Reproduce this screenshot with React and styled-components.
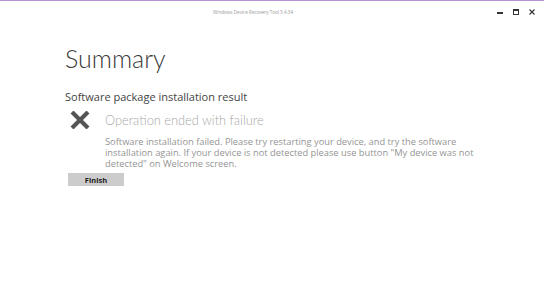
import React from 'react';
import styled, {createGlobalStyle} from 'styled-components';

const GlobalStyle = createGlobalStyle`
  html, body {
    margin: 0;
    padding: 0;
    background: #ffffff;
  }
  body {
    font-family: 'Open Sans', 'Liberation Sans', sans-serif;
  }
`

const Window = styled.div`
  width: 544px;
  height: 300px;
  box-sizing: border-box;
  border-top: 1px solid #b592cf;
  display: flex;
  flex-direction: column;
  overflow: hidden;
`

const TitleBar = styled.div`
  height: 21px;
  display: grid;
  grid-template-columns: 1fr auto 1fr;
  align-items: center;
`

const Title = styled.div`
  grid-column: 2;
  font-size: 4.6px;
  color: #9a9a9a;
  margin-right: 38px;
`

const WindowControls = styled.div`
  grid-column: 3;
  justify-self: end;
  display: flex;
  align-items: center;
  gap: 10px;
  padding-right: 9px;
`

const ControlButton = styled.div`
  width: 6px;
  height: 6px;
  display: flex;
  align-items: center;
  justify-content: center;
`

const Content = styled.div`
  padding: 20px 0 0 65px;
  display: flex;
  flex-direction: column;
`

const Heading = styled.h1`
  margin: 0;
  font-family: 'Lato', 'Open Sans', sans-serif;
  font-weight: 300;
  font-size: 25px;
  line-height: 32px;
  color: #3a3a3a;
`

const Subheading = styled.h2`
  margin: 15px 0 0 0;
  font-weight: 400;
  font-size: 11px;
  line-height: 16px;
  color: #444444;
`

const ResultRow = styled.div`
  display: grid;
  grid-template-columns: 40px auto;
  margin-top: 5px;
`

const IconCell = styled.div`
  padding: 1px 0 0 5px;
`

const ResultTitle = styled.div`
  font-family: 'Lato', 'Open Sans', sans-serif;
  font-size: 12.8px;
  font-weight: 300;
  line-height: 20px;
  color: #a8a8a8;
`

const ResultText = styled.p`
  grid-column: 2;
  margin: 2px 0 0 0;
  font-size: 9.3px;
  line-height: 11px;
  color: #959595;
  width: 420px;
`

const ButtonRow = styled.div`
  display: flex;
  padding: 4px 0 0 3px;
`

const FinishButton = styled.button`
  width: 56px;
  height: 13px;
  padding: 0;
  border: none;
  background: #cccccc;
  font-family: 'Open Sans', 'Liberation Sans', sans-serif;
  font-size: 7.5px;
  font-weight: 700;
  color: #222222;
`

const App = () => {
  return (
    <>
      <GlobalStyle />
      <Window>
        <TitleBar>
          <Title>Windows Device Recovery Tool 3.4.34</Title>
          <WindowControls>
            <ControlButton>
              <svg width="6" height="6" viewBox="0 0 6 6">
                <rect x="0" y="3" width="6" height="2" fill="#333" />
              </svg>
            </ControlButton>
            <ControlButton>
              <svg width="6" height="6" viewBox="0 0 6 6">
                <rect x="0.5" y="0.5" width="5" height="5" fill="none" stroke="#333" strokeWidth="1" />
                <rect x="0" y="0" width="6" height="2" fill="#333" />
              </svg>
            </ControlButton>
            <ControlButton>
              <svg width="6" height="6" viewBox="0 0 6 6">
                <path d="M0.5 0.5 L5.5 5.5 M5.5 0.5 L0.5 5.5" stroke="#333" strokeWidth="1.1" />
              </svg>
            </ControlButton>
          </WindowControls>
        </TitleBar>
        <Content>
          <Heading>Summary</Heading>
          <Subheading>Software package installation result</Subheading>
          <ResultRow>
            <IconCell>
              <svg width="20" height="18" viewBox="0 0 20 18">
                <path d="M2 1 L18 17 M18 1 L2 17" stroke="#555555" strokeWidth="4.2" />
              </svg>
            </IconCell>
            <ResultTitle>Operation ended with failure</ResultTitle>
            <ResultText>
              Software installation failed. Please try restarting your device, and try the software<br />
              installation again. If your device is not detected please use button "My device was not<br />
              detected" on Welcome screen.
            </ResultText>
          </ResultRow>
          <ButtonRow>
            <FinishButton>Finish</FinishButton>
          </ButtonRow>
        </Content>
      </Window>
    </>
  );
};

export default App;
